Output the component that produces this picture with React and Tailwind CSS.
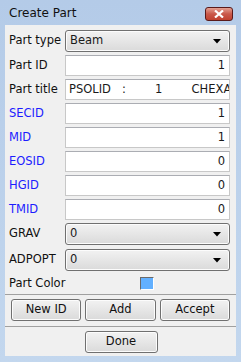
import React from "react";

const font = { fontFamily: '"DejaVu Sans", Tahoma, sans-serif' };

function Select({ value }) {
  return (
    <div className="relative flex h-[22px] w-[165px] items-center rounded-[3px] border border-[#707070] bg-gradient-to-b from-[#f2f2f2] to-[#dadada] pl-[4px] text-[11.5px] text-[#1a1a1a] shadow-[inset_0_0_0_1px_#fcfcfc]">
      <span>{value}</span>
      <svg className="absolute right-[8px] top-[8px]" width="8" height="5" viewBox="0 0 8 5">
        <path d="M0 0 L8 0 L4 4.5 Z" fill="#000" />
      </svg>
    </div>
  );
}

function Input({ value, left }) {
  return (
    <div
      className={`flex h-[21px] w-[165px] items-center overflow-hidden border border-[#c8c8c8] border-t-[#abadb3] bg-white text-[11.5px] text-[#1a1a1a] ${
        left ? "justify-start pl-[3px]" : "justify-end pr-[4px]"
      }`}
    >
      <span className="whitespace-pre">{value}</span>
    </div>
  );
}

function Row({ label, blue, children, gap }) {
  return (
    <div className={`flex items-center ${gap}`}>
      <div className={`w-[60px] pl-[4px] text-[11.5px] ${blue ? "text-[#1c1cff]" : "text-[#111]"}`}>{label}</div>
      {children}
    </div>
  );
}

function Btn({ children, className }) {
  return (
    <div
      className={`flex h-[22px] items-center justify-center rounded-[3px] border border-[#707070] bg-gradient-to-b from-[#f2f2f2] to-[#dadada] text-[11.5px] text-[#111] shadow-[inset_0_0_0_1px_#fcfcfc] ${className}`}
    >
      {children}
    </div>
  );
}

export default function App() {
  return (
    <div style={font} className="flex h-[362px] w-[241px] flex-col bg-gradient-to-b from-[#b4cbe8] to-[#c3d7ee]">
      <div className="relative flex h-[25px] items-center pl-[9px]">
        <span className="text-[12px] text-[#111]">Create Part</span>
        <div className="absolute left-[205px] top-[7px] flex h-[14px] w-[28px] items-center justify-center rounded-[3px] border border-[#5a1a1a] bg-gradient-to-b from-[#e3a093] via-[#c9584a] to-[#c0412f]">
          <svg width="10" height="8" viewBox="0 0 10 8">
            <path d="M1 0.5 L9 7.5 M9 0.5 L1 7.5" stroke="#fff" strokeWidth="2.2" />
          </svg>
        </div>
      </div>
      <div className="mx-[5px] flex h-[331px] flex-col bg-[#f0f0f0] pt-[5px]">
        <Row label="Part type">
          <Select value="Beam" />
        </Row>
        <Row label="Part ID" gap="mt-[3px]">
          <Input value="1" />
        </Row>
        <Row label="Part title" gap="mt-[3px]">
          <Input left value={"PSOLID   :        1        CHEXA8"} />
        </Row>
        <Row label="SECID" blue gap="mt-[3px]">
          <Input value="1" />
        </Row>
        <Row label="MID" blue gap="mt-[3px]">
          <Input value="1" />
        </Row>
        <Row label="EOSID" blue gap="mt-[3px]">
          <Input value="0" />
        </Row>
        <Row label="HGID" blue gap="mt-[3px]">
          <Input value="0" />
        </Row>
        <Row label="TMID" blue gap="mt-[3px]">
          <Input value="0" />
        </Row>
        <Row label="GRAV" gap="mt-[3px]">
          <Select value="0" />
        </Row>
        <Row label="ADPOPT" gap="mt-[4px]">
          <Select value="0" />
        </Row>
        <div className="mt-[6px] flex h-[13px] items-center">
          <div className="w-[135px] pl-[4px] text-[11.5px] text-[#111]">Part Color</div>
          <div className="h-[13px] w-[14px] border border-[#6a6a6a] border-b-white border-r-white bg-[#62b0ff]" />
        </div>
        <div className="mt-[4px] h-[1px] bg-[#a0a0a0]" />
        <div className="mt-[4px] grid grid-cols-3 gap-[4px] px-[6px]">
          <Btn>New ID</Btn>
          <Btn>Add</Btn>
          <Btn>Accept</Btn>
        </div>
        <div className="mt-[5px] h-[1px] bg-[#a0a0a0]" />
        <div className="mt-[4px] flex justify-center pl-[1px]">
          <Btn className="w-[73px] h-[21px]">Done</Btn>
        </div>
      </div>
    </div>
  );
}
